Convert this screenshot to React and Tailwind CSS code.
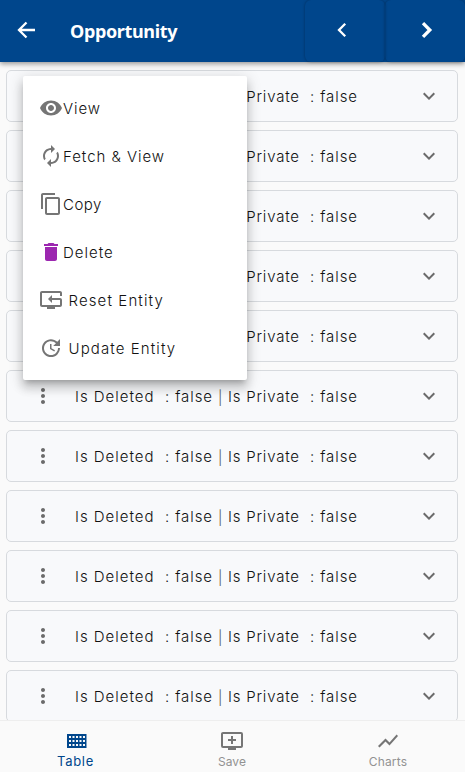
import { MdRemoveRedEye, MdAutorenew, MdContentCopy, MdDelete, MdResetTv, MdUpdate, MdMoreVert, MdExpandMore, MdAddToQueue, MdShowChart } from "react-icons/md";

const menu = [
  { Icon: MdRemoveRedEye, label: "View", track: "tracking-[0.9px]" },
  { Icon: MdAutorenew, label: "Fetch & View", track: "tracking-[0.95px]" },
  { Icon: MdContentCopy, label: "Copy", track: "tracking-[0.5px]" },
  { Icon: MdDelete, label: "Delete", track: "tracking-[1px]", purple: true },
  { Icon: MdResetTv, label: "Reset Entity", track: "tracking-[1.12px]", spaced: true },
  { Icon: MdUpdate, label: "Update Entity", track: "tracking-[1.1px]", spaced: true },
];

function Stroke({ d, width }) {
  return (
    <svg width="24" height="24" viewBox="0 0 24 24" fill="none" stroke="white" strokeWidth={width}>
      <path d={d} />
    </svg>
  );
}

function TableIcon() {
  const holes = [];
  for (let r = 0; r < 3; r++) for (let c = 0; c < 5; c++) holes.push([2 + c * 3.5, 2 + r * 4]);
  return (
    <svg width="20" height="14" viewBox="0 0 20 14">
      <rect width="19.5" height="14" fill="#00468c" />
      {holes.map(([x, y]) => <rect key={`${x}-${y}`} x={x} y={y} width="2" height="2" fill="#fafafa" />)}
    </svg>
  );
}

function Row() {
  return (
    <div className="flex h-[52px] shrink-0 items-center rounded-[5px] border border-[#d7dade] bg-[#f8f9fb] pr-4 pl-6 text-[15px] text-[#111111]">
      <MdMoreVert size={24} color="#6b6b6b" className="shrink-0" />
      <div className="ml-5 flex flex-1 items-center pt-0.5 font-['Inter',sans-serif] font-light whitespace-pre">
        <span className="w-[90px] tracking-[0.98px]">Is Deleted</span>
        <span className="w-[53px] tracking-[0.9px]">: false</span>
        <span className="w-[10px] text-[14px] text-[#555555]">|</span>
        <span className="w-[82px] tracking-[0.8px]">Is Private</span>
        <span className="tracking-[0.9px]">: false</span>
      </div>
      <MdExpandMore size={24} color="#6b6b6b" className="shrink-0" />
    </div>
  );
}

export default function App() {
  return (
    <div className="relative flex h-[772px] w-[465px] flex-col overflow-hidden bg-[#fafafa] font-['Inter',sans-serif]">
      <header className="z-10 flex h-[62px] shrink-0 items-stretch bg-[#00468c] text-white shadow-[0_2px_5px_rgba(0,0,0,0.4)]">
        <div className="flex flex-1 items-center pb-0.5 pl-[14px]">
          <Stroke d="M21 12H5.5M12.5 4.5L5 12l7.5 7.5" width={2.3} />
          <h1 className="ml-8 pt-0.5 font-['Noto_Sans',sans-serif] text-[18px] font-bold tracking-[-0.35px]">Opportunity</h1>
        </div>
        <button className="flex w-20 items-center justify-center rounded-md pr-[6px] pb-0.5 shadow-[0_0_3px_rgba(0,0,0,0.35)]">
          <Stroke d="M15.2 5.8L9 12l6.2 6.2" width={2.3} />
        </button>
        <button className="flex w-20 items-center justify-center rounded-md pb-0.5 pl-0.5 shadow-[0_0_3px_rgba(0,0,0,0.35)]">
          <Stroke d="M9 5.2L15.8 12 9 18.8" width={3.3} />
        </button>
      </header>
      <main className="flex min-h-0 flex-1 flex-col gap-2 overflow-hidden pt-2 pr-[7px] pl-1.5">
        {Array.from({ length: 11 }, (_, i) => <Row key={i} />)}
      </main>
      <nav className="flex h-[52px] shrink-0 justify-between border-t border-[#eeeeee] bg-[#fafafa]">
        <div className="flex w-[153px] flex-col items-center pt-[13px] text-[#00468c]">
          <TableIcon />
          <span className="mt-[3px] mr-0.5 text-[13px] leading-5 tracking-[0.7px]">Table</span>
        </div>
        <div className="flex w-[158px] flex-col items-center pt-2 text-[#757575]">
          <MdAddToQueue size={24} />
          <span className="mt-px text-[12px] leading-4 tracking-[0.1px] text-[#929292]">Save</span>
        </div>
        <div className="flex w-[154px] flex-col items-center pt-2 text-[#757575]">
          <MdShowChart size={24} />
          <span className="mt-px text-[12px] leading-4 tracking-[0.2px] text-[#929292]">Charts</span>
        </div>
      </nav>
      <div className="absolute top-[76px] left-[23px] z-20 flex h-[304px] w-[224px] flex-col rounded-[2px] bg-white py-2 pl-4 shadow-[0_5px_5px_-3px_rgba(0,0,0,0.2),0_8px_10px_1px_rgba(0,0,0,0.14),0_3px_14px_2px_rgba(0,0,0,0.12)]">
        {menu.map(({ Icon, label, track, purple, spaced }) => (
          <div key={label} className="flex h-12 items-center text-[15px] font-light text-[#111111]">
            <Icon size={24} color={purple ? "#9c27b0" : "#757575"} className="shrink-0" />
            <span className={`pt-0.5 whitespace-nowrap ${track} ${spaced ? "ml-[5.5px]" : ""}`}>{label}</span>
          </div>
        ))}
      </div>
    </div>
  );
}
